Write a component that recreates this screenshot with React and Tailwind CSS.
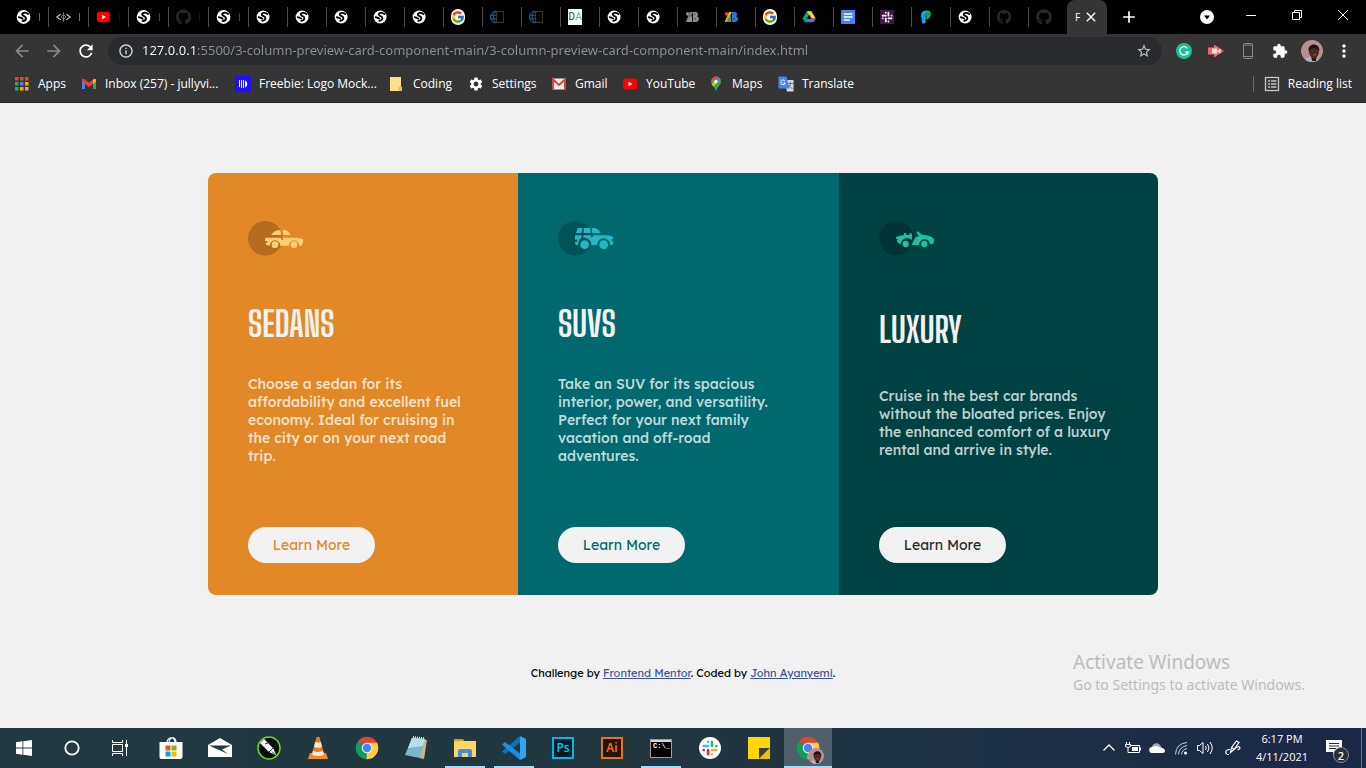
import React from "react";
import { FaGithub } from "react-icons/fa";
import { FcGoogle } from "react-icons/fc";
import {
  MdArrowBack,
  MdArrowForward,
  MdRefresh,
  MdInfoOutline,
  MdStarBorder,
  MdExtension,
  MdMoreVert,
  MdSettings,
  MdClose,
  MdAdd,
} from "react-icons/md";

/* ---------- favicons ---------- */

const Globe = () => (
  <svg viewBox="0 0 16 16" className="size-4">
    <circle cx="8" cy="8" r="7.3" fill="#fff" />
    <path
      d="M12.800 4.800C10.500 2.800 6.300 3 6.500 5.300 6.700 7.300 10.800 6.800 10.600 9.400 10.500 11 9 12 7 12.300M3 8.200C4.500 8.800 6 9 7 9.800"
      fill="none" stroke="#000" strokeWidth="2" strokeLinecap="round"
    />
  </svg>
);
const Brackets = () => (
  <svg viewBox="0 0 16 16" className="size-4" fill="none" stroke="#b9c1c6">
    <path d="M5 5 .8 8 5 11M11 5l4.200 3-4.200 3" strokeWidth="1.300" />
    <path d="m8 5 2.500 3L8 11 5.500 8zM8 3v10" stroke="#76838b" />
  </svg>
);
const YouTube = () => (
  <svg viewBox="0 0 16 16" className="size-4">
    <rect x="1" y="2.500" width="14" height="11" rx="2.500" fill="#f00" />
    <path d="M6.500 5.700v4.600L10.500 8z" fill="#fff" />
  </svg>
);
const Octocat = () => <FaGithub className="size-4 text-[#24292e]" />;
const Google = () => (
  <span className="flex size-4 items-center justify-center rounded-full bg-white">
    <FcGoogle className="size-[14px]" />
  </span>
);
const GlobeBook = () => (
  <svg viewBox="0 0 16 16" className="size-4" fill="none">
    <path d="M7 1.500a6.500 6.500 0 0 0 0 13M7 1.500C2.500 5 2.500 11 7 14.500M.8 6H7M.8 10H7" stroke="#2e6ca4" />
    <rect x="7.500" y="2" width="8" height="12" stroke="#4f4636" />
  </svg>
);
const DaIcon = () => (
  <span className="flex size-4 items-center justify-center bg-white font-['Roboto',sans-serif] text-[10px] leading-4 text-[#333]">
    D<span className="text-[#3fb8a5]">A</span>
  </span>
);
const Blocks = ({ gray }) => (
  <svg viewBox="0 0 16 16" className="size-4">
    <circle cx="3" cy="4.500" r="2" fill={gray ? "#858585" : "#e8453c"} />
    <path d="M5.500 2.500H9L4 13.500H.7z" fill={gray ? "#7b7b7b" : "#f9a11b"} />
    <path d="M5 8.500 8 7v6.500H3z" fill={gray ? "#969696" : "#34a853"} />
    <path d="M9 2.500h3.200a2.500 2.500 0 0 1 1.300 4.600 3.300 3.300 0 0 1-1 6.400H9z" fill={gray ? "#8b8b8b" : "#2a7de1"} />
    <path d="M10.500 5h1M10.500 10h1.500" stroke="#111" />
  </svg>
);
const Drive = () => (
  <svg viewBox="0 0 16 16" className="size-4">
    <path d="M5.500 1.500h5L6 9.500 3.300 14 .6 9.700z" fill="#11a861" />
    <path d="M5.500 1.500h5l5 8.300h-5z" fill="#ffcf48" />
    <path d="M3.300 14 5.900 9.700h9.600L12.800 14z" fill="#2684fc" />
    <path d="M10.600 9.700h4.900L12.800 14z" fill="#ea4335" />
    <path d="M8 5.500 5.700 9.700h4.800z" fill="#000" />
  </svg>
);
const Docs = () => (
  <svg viewBox="0 0 16 16" className="size-4">
    <rect width="16" height="16" rx="1.500" fill="#4285f4" />
    <path d="M3 4.500h10M3 8h10M3 11.500h7" stroke="#fff" strokeWidth="1.700" />
  </svg>
);
const SlackMark = ({ colors }) => (
  <g fill="none" strokeWidth="2" strokeLinecap="round">
    <path d="M6.500 3v.1M3 6.500h3.500" stroke={colors[0]} />
    <path d="M9.500 3v3.500M13 6.500h.1" stroke={colors[1]} />
    <path d="M9.500 9.500H13M9.500 13v.1" stroke={colors[2]} />
    <path d="M3 9.500h.1M6.500 9.500V13" stroke={colors[3]} />
  </g>
);
const SlackTab = () => (
  <svg viewBox="0 0 16 16" className="size-4">
    <rect width="16" height="16" fill="#481349" />
    <SlackMark colors={["#fff", "#fff", "#fff", "#fff"]} />
  </svg>
);
const PLogo = () => (
  <svg viewBox="0 0 16 16" className="size-4">
    <path d="M2.500 4.500C3.500 1.500 6 .5 9 .8L7.500 5v8c0 3-4.500 3-4.500 0V8H2z" fill="#16a3ee" />
    <path d="M8 1c5-1.500 6 2.500 5 5.500-.8 2.700-3 4.500-6 4 2-1.500 1.500-2 1-4.500z" fill="#15ad5b" />
    <path d="m6 7 2.500-3L10 5.500 12 4" fill="none" stroke="#083" />
  </svg>
);

const tabs = [
  [Globe, "bg-[#2b6fb0]"],
  [Brackets, "bg-[#1d86cf]"],
  [YouTube, "bg-[#08086b]"],
  [Globe, "bg-[#3a4a55]"],
  [Octocat, "bg-[#0a0aa8]"],
  [Globe, "bg-[#0b4fae]"],
  [Globe], [Globe], [Globe], [Globe], [Globe],
  [Google], [GlobeBook], [GlobeBook], [DaIcon], [Globe], [Globe],
  [() => <Blocks gray />], [() => <Blocks />],
  [Google], [Drive], [Docs], [SlackTab], [PLogo], [Globe], [Octocat], [Octocat],
];

function TabStrip() {
  return (
    <div className="flex h-[34px] bg-black pl-2 text-white">
      {tabs.map(([Icon, mark], i) => (
        <button
          key={i}
          aria-label={`Tab ${i + 1}`}
          className={`flex shrink-0 items-center gap-2 pl-2 ${i < 6 ? "w-10" : "w-[39px]"}`}
        >
          <Icon />
          <span className={`h-2 w-px ${mark || ""}`} />
          {i < 26 && <span className="ml-auto -mr-px h-5 w-px bg-[#4a4a4a]" />}
        </button>
      ))}
      <div className="flex w-10 shrink-0 items-center rounded-t-lg bg-[#353535] pl-2">
        <span className="w-2 text-[10px]">F</span>
        <button aria-label="Close tab">
          <MdClose className="size-4" />
        </button>
      </div>
      <button aria-label="New tab" className="ml-3">
        <MdAdd className="size-5" />
      </button>
      <div className="ml-auto flex items-center">
        <button aria-label="Search tabs" className="mr-[14px] flex size-[14px] items-center justify-center rounded-full bg-white">
          <svg viewBox="0 0 8 8" className="size-2"><path d="M1 2.500h6L4 6.500z" fill="#000" /></svg>
        </button>
        <button aria-label="Minimize" className="flex w-[46px] justify-center pb-1">
          <svg viewBox="0 0 12 12" className="size-3" stroke="#fff"><path d="M1 6.500h10" /></svg>
        </button>
        <button aria-label="Restore" className="flex w-[46px] justify-center pb-1">
          <svg viewBox="0 0 12 12" className="size-3" fill="none" stroke="#fff"><path d="M1.500 3.500h7v7h-7zM3.500 3V1.500h7v7H9" /></svg>
        </button>
        <button aria-label="Close" className="flex w-[46px] justify-center pb-1">
          <svg viewBox="0 0 12 12" className="size-3" stroke="#fff"><path d="m1 1 10 10M11 1 1 11" /></svg>
        </button>
      </div>
    </div>
  );
}

const Avatar = ({ className }) => (
  <svg viewBox="0 0 22 22" className={className}>
    <clipPath id="face"><circle cx="11" cy="11" r="11" /></clipPath>
    <g clipPath="url(#face)">
      <rect width="22" height="22" fill="#b98f90" />
      <path d="M4 22c0-4 3-5 7-5s7 2 8 5z" fill="#a9b6cb" />
      <path d="M10 15h6l-1 6h-4z" fill="#2b1a17" />
      <ellipse cx="13" cy="11.500" rx="5" ry="6.500" fill="#4a2a22" />
      <path d="M7.500 11c-1-8 11-9 11 0-2-4-8-4-11 0z" fill="#1a1214" />
      <path d="M12 14.800h3" stroke="#8f665b" />
    </g>
  </svg>
);

function Toolbar() {
  return (
    <div className="flex h-[34px] items-center bg-[#353535] pl-3 pr-3">
      <div className="flex items-center gap-3 text-[#8a8a8a]">
        <button aria-label="Back"><MdArrowBack className="size-5" /></button>
        <button aria-label="Forward"><MdArrowForward className="size-5" /></button>
        <button aria-label="Reload" className="text-white"><MdRefresh className="size-5" /></button>
      </div>
      <div className="ml-3 flex h-7 flex-1 items-center gap-2 rounded-full bg-[#292a2d] pl-[10px] pr-[10px]">
        <MdInfoOutline className="size-4 text-[#d8dadd]" />
        <input
          aria-label="Address"
          readOnly
          value="127.0.0.1:5500/3-column-preview-card-component-main/3-column-preview-card-component-main/index.html"
          className="min-w-0 flex-1 bg-[linear-gradient(to_right,#ffffff_54px,#8d9093_54px)] bg-clip-text font-['Noto_Sans',sans-serif] text-[13px] text-transparent outline-none"
        />
        <button aria-label="Bookmark this page"><MdStarBorder className="size-4 text-[#c4c6c9]" /></button>
      </div>
      <div className="ml-[14px] flex items-center gap-4">
        <button aria-label="Grammarly">
          <svg viewBox="0 0 16 16" className="size-4">
            <circle cx="8" cy="8" r="8" fill="#15c39a" />
            <path d="M11.500 5.500A4.200 4.200 0 1 0 12 9H9.300M12 9v2.500" fill="none" stroke="#fff" strokeWidth="1.300" />
          </svg>
        </button>
        <button aria-label="Screen recorder">
          <svg viewBox="0 0 16 16" className="size-4">
            <path d="M0 4.500h6V1.500L16 8 6 14.500V11.500H0z" fill="#f0686a" />
            <path d="M4 5.500h5v5H4zM9 8l3.500-2.500v5z" fill="#fff" opacity=".75" />
          </svg>
        </button>
        <button aria-label="Mobile view">
          <svg viewBox="0 0 16 16" className="size-4" fill="none" stroke="#888">
            <rect x="3.500" y=".5" width="9" height="15" rx="1" /><path d="M3.500 2h9M3.500 13.500h9" />
          </svg>
        </button>
        <button aria-label="Extensions"><MdExtension className="size-4 text-white" /></button>
        <button aria-label="Profile" className="-ml-[3px]"><Avatar className="size-[22px]" /></button>
        <button aria-label="Menu" className="-ml-[5px]"><MdMoreVert className="size-5 text-white" /></button>
      </div>
    </div>
  );
}

/* ---------- bookmarks ---------- */

const AppsGrid = () => (
  <svg viewBox="0 0 16 16" className="size-4">
    {["#ea4335", "#ea4335", "#ea4335", "#34a853", "#4285f4", "#f9ab00", "#34a853", "#f9ab00", "#f9ab00"].map((c, i) => (
      <rect key={i} x={1 + (i % 3) * 5} y={1 + Math.floor(i / 3) * 5} width="3.500" height="3.500" fill={c} />
    ))}
  </svg>
);
const GmailNew = () => (
  <svg viewBox="0 0 16 16" className="size-4">
    <path d="M1 4v9h3V7z" fill="#4285f4" /><path d="M15 4v9h-3V7z" fill="#34a853" />
    <path d="M1 3.500v2L8 11l7-5.500v-2c-1-1.500-2-.7-3 0L8 6.700 4 3.500c-1-.7-2-1.500-3 0z" fill="#ea4335" />
    <path d="M12 3.500c1-.7 3-1.200 3 1v1L12 8z" fill="#fbbc04" />
  </svg>
);
const Freebie = () => (
  <svg viewBox="0 0 16 16" className="size-4">
    <rect width="16" height="16" fill="#1c0dff" />
    <path d="M4.500 4v7M6.500 4v8M8.500 4v8" stroke="#fff" /><path d="M10 4.500c3 1 3 6 0 7z" fill="#fff" />
  </svg>
);
const Folder = () => (
  <svg viewBox="0 0 16 16" className="size-4">
    <path d="M1 1h11v9.500l1 1V15H1z" fill="#ffe08a" /><path d="M9.500 15v-3.500l2-1.500 1.500 1.500V15z" fill="#e9c352" />
  </svg>
);
const GmailOld = () => (
  <svg viewBox="0 0 16 16" className="size-4">
    <rect x="1" y="2.500" width="14" height="11" rx="1" fill="#eee" />
    <path d="M2 13.500v-10L8 9l6-5.500v10" fill="none" stroke="#d9443a" strokeWidth="2" />
  </svg>
);
const MapPin = () => (
  <svg viewBox="0 0 16 16" className="size-4">
    <path d="M8 .5a5 5 0 0 1 5 5C13 9 9 11 8 15.500 7 11 3 9 3 5.500a5 5 0 0 1 5-5z" fill="#34a853" />
    <path d="M8 .5a5 5 0 0 0-4 2L6.500 5 11 1.500C10 .8 9 .5 8 .5z" fill="#ea4335" />
    <path d="m11 1.500-4.500 4L8 8l4.500-4.500z" fill="#4285f4" />
    <path d="m3.700 8.200 4.100-5L8 8l-2.600 2.600z" fill="#fbbc04" />
    <circle cx="8" cy="5.500" r="1.700" fill="#fff" />
  </svg>
);
const Translate = () => (
  <svg viewBox="0 0 16 16" className="size-4">
    <path d="M6 4h9.500v11.500H9z" fill="#d5d9de" /><path d="M.5.500h8l3 12H.5z" fill="#4a83ee" />
    <path d="M10 7.500h5M12.500 6v1.500c0 2-1.500 3.500-2 4M11 9c1 2 2 3 3.500 3.500" stroke="#66727f" fill="none" />
    <path d="M7 5a2.300 2.300 0 1 0 .3 2H5.500" fill="none" stroke="#fff" />
  </svg>
);

const bookmarks = [
  ["Apps", AppsGrid, "w-[67px]"],
  ["Inbox (257) - jullyvi...", GmailNew, "w-[154px]"],
  ["Freebie: Logo Mock...", Freebie, "w-[154px]"],
  ["Coding", Folder, "w-[79px]"],
  ["Settings", () => <MdSettings className="size-4" />, "w-[83px]"],
  ["Gmail", GmailOld, "w-[71px]"],
  ["YouTube", YouTube, "w-[86px]"],
  ["Maps", MapPin, "w-[70px]"],
  ["Translate", Translate, "w-[80px]"],
];

function Bookmarks() {
  return (
    <nav className="flex h-[35px] items-center border-b border-[#252525] bg-[#353535] pl-[14px] pr-[14px] pb-[2px] text-[12px] text-white">
      {bookmarks.map(([label, Icon, width]) => (
        <a href="#" key={label} className={`flex shrink-0 items-center gap-2 whitespace-nowrap ${width}`}>
          <Icon />
          {label}
        </a>
      ))}
      <button className="ml-auto flex items-center gap-2 whitespace-nowrap border-l border-[#6a6a6a] pl-[10px] leading-4">
        <svg viewBox="0 0 16 16" className="size-4" fill="none" stroke="#c6c6c6">
          <rect x="1.500" y="1.500" width="13" height="13" strokeWidth="1.300" />
          <path d="M4 5h2M7 5h5.500M4 8h2M7 8h5.500M4 11h2M7 11h5.500" strokeWidth="1.500" />
        </svg>
        Reading list
      </button>
    </nav>
  );
}

/* ---------- page ---------- */

const Sedan = () => (
  <svg viewBox="0 0 168 105" className="h-[35px] w-14 shrink-0">
    <circle cx="52" cy="52" r="52" opacity=".2" />
    <g fill="#ffd073">
      <path d="M69 42 78 32Q85 27 97 27L100 42ZM104 27Q121 26 127 42H106Z" />
      <path d="M53 50H99L101 57H106L105 50H140Q158 51 165 54V64L161 74H154A16 16 0 0 0 122 74H97A16 16 0 0 0 65 74C58 74 53 70 52 65H58V60H51V53Z" />
      <circle cx="81" cy="71" r="10" /><circle cx="138" cy="71" r="10" />
    </g>
  </svg>
);
const Suv = () => (
  <svg viewBox="0 0 168 105" className="h-[35px] w-14 shrink-0">
    <circle cx="52" cy="52" r="52" opacity=".2" />
    <g fill="#26b5c4">
      <path d="M54 36 59 21H74L71 36ZM78 21H96L99 36H76ZM101 21H110Q122 24 128 36H103Z" />
      <path d="M51 43H71V50Q62 54 60 72H54L51 67V62H58V56H51ZM76 43H99V48H105V43H145Q160 43 165 48V54H161V60H165V68L162 72H157A20 20 0 0 0 117 72H100C100 58 90 50 76 50Z" />
      <circle cx="80" cy="71" r="13" /><circle cx="137" cy="71" r="13" />
    </g>
  </svg>
);
const Luxury = () => (
  <svg viewBox="0 0 168 105" className="h-[35px] w-14 shrink-0">
    <circle cx="52" cy="52" r="52" opacity=".2" />
    <g fill="#1fbf9f">
      <path d="M51 48Q62 43 74 43L76 36H81L83 42H91V37H98Q101 48 98 57C90 49 70 48 65 69Q56 68 53 59L57 55L51 53Z" />
      <path d="M98 72 108 51Q112 47 120 46L112 34 116 31 130 41Q154 42 165 54V61L162 68 153 70C152 50 122 48 120 72Z" />
      <circle cx="80" cy="69" r="9.500" /><circle cx="136" cy="69" r="9.500" />
    </g>
  </svg>
);

const cards = [
  {
    title: "SEDANS", Icon: Sedan, bg: "bg-[#e28826]", ink: "text-[#e28826]",
    text: "Choose a sedan for its\naffordability and excellent fuel\neconomy. Ideal for cruising in\nthe city or on your next road\ntrip.",
  },
  {
    title: "SUVS", Icon: Suv, bg: "bg-[#00696f]", ink: "text-[#00696f]",
    text: "Take an SUV for its spacious\ninterior, power, and versatility.\nPerfect for your next family\nvacation and off-road\nadventures.",
  },
  {
    title: "LUXURY", Icon: Luxury, bg: "bg-[#004241]", ink: "text-[#1c2f2f]",
    text: "Cruise in the best car brands\nwithout the bloated prices. Enjoy\nthe enhanced comfort of a luxury\nrental and arrive in style.",
  },
];

function Page() {
  return (
    <div className="relative flex flex-1 flex-col items-center bg-[#f1f1f1] px-8 pt-[70px] font-['Lexend_Deca','Lexend','Inter',sans-serif]">
      <main className="grid min-h-[422px] w-full max-w-[950px] grid-cols-[310fr_321fr_319fr] overflow-hidden rounded-lg">
        {cards.map(({ title, Icon, bg, ink, text }) => (
          <section key={title} className={`flex flex-col items-start justify-between px-10 pt-12 pb-8 ${bg}`}>
            <div className="mb-[17px]"><Icon /></div>
            <h2 className="font-['Big_Shoulders_Display','Roboto_Condensed',sans-serif] text-[35px] leading-[48px] font-bold text-[#f2f2f2]">
              {title}
            </h2>
            <p className="mb-[35px] text-[14px] leading-[18px] font-medium whitespace-pre-line text-white/75">{text}</p>
            <button className={`h-9 w-[127px] rounded-full bg-[#f2f2f2] text-[14px] ${ink}`}>Learn More</button>
          </section>
        ))}
      </main>
      <footer className="mt-[70px] text-[11px] leading-4 text-black">
        Challenge by <a href="#" className="text-[#3e52a3] underline">Frontend Mentor</a>. Coded by{" "}
        <a href="#" className="text-[#3e52a3] underline">John Ayanyemi</a>.
      </footer>
      <div className="absolute right-14 bottom-8 w-[237px] whitespace-nowrap font-['Noto_Sans',sans-serif] text-[#bcbcbc]">
        <p className="text-[19px] leading-6">Activate Windows</p>
        <p className="text-[14px] leading-[22px]">Go to Settings to activate Windows.</p>
      </div>
    </div>
  );
}

/* ---------- taskbar ---------- */

const Chrome = ({ className = "size-6" }) => (
  <svg viewBox="0 0 24 24" className={className}>
    <path d="M12 12 2.500 6A11.200 11.200 0 0 1 22 6.800z" fill="#db4437" />
    <path d="M12 12 22 6.800a11.200 11.200 0 0 1-10.500 16.400z" fill="#ffcd40" />
    <path d="M12 12l-.5 11.200A11.200 11.200 0 0 1 2.500 6z" fill="#0f9d58" />
    <path d="m11.500 23.200 5-8.500L12 12z" fill="#ffcd40" />
    <path d="M12 6.800h9.900A11 11 0 0 1 23 12l-6-2z" fill="#ffcd40" />
    <path d="M7.400 14.500 2.500 6 8 8z" fill="#0f9d58" />
    <circle cx="12" cy="12" r="5.300" fill="#f1f1f1" /><circle cx="12" cy="12" r="4.200" fill="#4285f4" />
  </svg>
);

const AdobeIcon = ({ label, style }) => (
  <span className={`flex size-[22px] items-center justify-center border-2 pb-px font-['Open_Sans',sans-serif] text-[12px] leading-none font-semibold ${style}`}>
    {label}
  </span>
);

const apps = [
  ["Microsoft Store", () => (
    <svg viewBox="0 0 24 24" className="size-6">
      <path d="M8 7C8 0 16 0 16 7M10 7c0-7 7-7 7 0" fill="none" stroke="#fff" strokeWidth="1.200" />
      <path d="M.5 6h23v15q0 2-2 2h-19q-2 0-2-2z" fill="#fff" />
      <path d="M6.500 9.500h5v5h-5z" fill="#f25022" /><path d="M12.500 9.500h5v5h-5z" fill="#7fba00" />
      <path d="M6.500 15.500h5v5h-5z" fill="#00a4ef" /><path d="M12.500 15.500h5v5h-5z" fill="#ffb900" />
    </svg>
  )],
  ["Mail", () => (
    <svg viewBox="0 0 24 24" className="size-6">
      <path d="M0 9 12 2l12 7v12H0z" fill="#fff" /><path d="M1 9.500h22l-9 4 6 4.500z" fill="#213a43" />
    </svg>
  )],
  ["CorelDRAW", () => (
    <svg viewBox="0 0 24 24" className="size-6">
      <circle cx="12" cy="12" r="11" fill="#070a07" stroke="#76d21c" strokeWidth="1.500" />
      <path d="m3 7 4-4 9 9 3.500 7.500L12 16z" fill="#fff" /><path d="m8 8 5-2M12 16l4-4M15 15.500l3 3" stroke="#222" fill="none" />
    </svg>
  )],
  ["VLC", () => (
    <svg viewBox="0 0 24 24" className="size-6">
      <path d="M4 17h16l2 6H2z" fill="#f58a1f" />
      <path d="m10.500 1-5 18c2 2.500 11 2.500 13 0l-5-18z" fill="#f07c12" />
      <path d="m9.300 6-1.300 5c2 1 6 1 8 0l-1.300-5q-2.700 1-5.400 0zM7 15l-1 3.500c2 2 10 2 12 0L17 15q-5 2-10 0z" fill="#e8ebec" />
    </svg>
  )],
  ["Google Chrome", () => <Chrome />],
  ["Notepad", () => (
    <svg viewBox="0 0 24 24" className="size-6">
      <path d="m8 2 15 2-3 19-5-1z" fill="#cbb68d" /><path d="m8 2 13 1-5 19L1 19z" fill="#78b9cb" />
      <path d="m8 2 13 1-2 7-15 2z" fill="#b6dfe7" /><path d="m9 1 12 1.500" stroke="#eee" strokeWidth="2" strokeDasharray="1 1" />
    </svg>
  )],
  ["File Explorer", () => (
    <svg viewBox="0 0 24 24" className="size-6">
      <path d="M1 3h9l2 3H1z" fill="#d89a12" /><path d="M1 5h22v16H1z" fill="#fdd465" />
      <path d="M5 21v-6q0-2 2-2h10q2 0 2 2v6h-4v-4H9v4z" fill="#3e8fdc" />
    </svg>
  ), "open"],
  ["Visual Studio Code", () => (
    <svg viewBox="0 0 24 24" className="size-6">
      <path d="M18 0v6.500L3 18 0 15.500z" fill="#0873bd" /><path d="M18 24v-6.500L3 6 0 8.500z" fill="#1f8fdf" />
      <path d="m18 0 6 3v18l-6 3z" fill="#2da7ee" />
    </svg>
  ), "open"],
  ["Photoshop", () => <AdobeIcon label="Ps" style="border-[#00b8ea] bg-[#001d26] text-[#00c8ff]" />],
  ["Illustrator", () => <AdobeIcon label="Ai" style="border-[#e87410] bg-[#261300] text-[#ff7c00]" />],
  ["Command Prompt", () => (
    <span className="flex h-[19px] w-[22px] flex-col border border-[#9b9b9b] bg-black font-['Liberation_Mono',monospace] text-[7px] leading-[9px] font-bold text-white">
      <span className="h-[2px] bg-[#d8d8d8]" />
      <span className="pl-px">C:\_</span>
    </span>
  ), "open"],
  ["Slack", () => (
    <svg viewBox="1.500 1.500 13 13" className="size-[22px]">
      <circle cx="8" cy="8" r="6.500" fill="#fff" />
      <g transform="translate(2 2) scale(.75)"><SlackMark colors={["#36c5f0", "#2eb67d", "#ecb22e", "#e01e5a"]} /></g>
    </svg>
  )],
  ["Sticky Notes", () => (
    <svg viewBox="0 0 22 22" className="size-[22px]">
      <path d="M0 0h22v22H0z" fill="#ffd60a" /><path d="M11 22V11h11z" fill="#3e3d38" />
      <path d="M22 11v11H11z" fill="#efc000" />
    </svg>
  )],
  ["Google Chrome profile", () => (
    <span className="relative flex">
      <Chrome />
      <Avatar className="absolute -right-1 -bottom-1 size-4" />
    </span>
  ), "active"],
];

function Taskbar() {
  return (
    <footer className="flex h-10 bg-linear-to-r from-[#213a42] via-[#21363f] to-[#1a2746] font-['Open_Sans',sans-serif] text-white">
      <button aria-label="Start" className="flex w-12 items-center justify-center">
        <svg viewBox="0 0 16 16" className="size-4" fill="#fff"><path d="M0 2.200 6.500 1.300v6.300H0zM7.300 1.200 16 0v7.600H7.300zM0 8.400h6.500v6.300L0 13.800zM7.300 8.400H16V16l-8.700-1.200z" /></svg>
      </button>
      <button aria-label="Cortana" className="flex w-12 items-center justify-center">
        <svg viewBox="0 0 16 16" className="size-4" fill="none" stroke="#fff" strokeWidth="1.800"><circle cx="8" cy="8" r="6.700" /></svg>
      </button>
      <button aria-label="Task View" className="mr-[3px] flex w-12 items-center justify-center">
        <svg viewBox="0 0 16 16" className="size-4" fill="none" stroke="#fff"><path d="M.5 0v2.500h10V0M.5 16v-2.500h10V16M.5 4.500h10v7H.5zM14.500 0v16" /><path d="M13 4h3v3h-3z" fill="#fff" stroke="none" /></svg>
      </button>
      <div className="flex gap-px">
        {apps.map(([name, Icon, state]) => (
          <button
            key={name}
            aria-label={name}
            className={`relative flex w-12 items-center justify-center ${state === "active" ? "bg-[#4e606a]" : ""}`}
          >
            <Icon />
            {state && <span className={`absolute bottom-0 h-[2px] bg-[#a6dcf8] ${state === "active" ? "w-12" : "w-10"}`} />}
          </button>
        ))}
      </div>
      <div className="ml-auto flex items-center gap-2">
        <button aria-label="Show hidden icons">
          <svg viewBox="0 0 16 16" className="size-4" fill="none" stroke="#fff" strokeWidth="1.300"><path d="m2.500 10.500 5.500-5.500 5.500 5.500" /></svg>
        </button>
        <button aria-label="Battery">
          <svg viewBox="0 0 16 16" className="size-4" fill="none" stroke="#fff">
            <path d="M5.500 5.500h9v7h-9M15.500 7.500v3M1.500 2v2.500M4.500 2v2.500M.5 4.500h5v2q-2.500 2-5 0zM3 7.500v5h3" /><path d="M7 7h6v4H7z" fill="#fff" stroke="none" />
          </svg>
        </button>
        <button aria-label="OneDrive">
          <svg viewBox="0 0 16 16" className="size-4"><path d="M3 8a4.500 4.500 0 0 1 8-3l2 3z" fill="#a7adb8" /><path d="M3 13a3 3 0 0 1 .5-6L7 6l4 1.500q5 .5 5 3.500 0 2-2.500 2z" fill="#fff" /></svg>
        </button>
        <button aria-label="Network">
          <svg viewBox="0 0 16 16" className="size-4" fill="none" stroke="#fff"><path d="M2.500 14.500Q3 3.500 14 2.500M5.500 14.500Q6 7 14 5.500M8.500 14.500Q9 9.500 14 8.500" stroke="#c9ced7" /><circle cx="12.500" cy="13" r="1.500" fill="#fff" stroke="none" /></svg>
        </button>
        <button aria-label="Volume">
          <svg viewBox="0 0 16 16" className="size-4" fill="none" stroke="#fff"><path d="M.5 5.500h2l3.500-3v11l-3.500-3h-2zM8.500 6q1.500 2 0 4M10.500 4q3 4 0 8M13 2q4.500 6 0 12" /></svg>
        </button>
        <button aria-label="Windows Ink" className="ml-1">
          <svg viewBox="0 0 16 16" className="size-4" fill="none" stroke="#fff" strokeWidth="1.200"><path d="m5.500 12.500 1-5 5-6.500 2.500 1.500-5 7zM6.500 7.500 9 9.500M5 9.500Q1 9.500 .8 12t3.200 2.500M9 9.500q4-4 5.500-2.500t-2 3" /></svg>
        </button>
        <time className="ml-[6px] w-[54px] pb-px text-center text-[11px] leading-[18px] whitespace-nowrap">
          6:17 PM<br />4/11/2021
        </time>
        <button aria-label="Notifications" className="relative ml-2 mr-3 flex size-[24px] items-center">
          <svg viewBox="0 0 18 18" className="size-[18px]"><path d="M1 1h16v12h-6l-3 4v-4H1z" fill="#fff" /><path d="M4 4.500h10M4 7h10M4 9.500h7" stroke="#1c2b47" /></svg>
          <span className="absolute right-0 -bottom-[3px] flex size-4 items-center justify-center rounded-full border border-[#8b8f96] bg-[#2c2f35] text-[11px] leading-none font-semibold">2</span>
        </button>
        <span className="mr-1 -ml-2 h-10 w-px bg-[#6a7286]" />
      </div>
    </footer>
  );
}

export default function App() {
  return (
    <div className="flex min-h-screen flex-col overflow-x-hidden font-['Open_Sans',sans-serif]">
      <header>
        <TabStrip />
        <Toolbar />
        <Bookmarks />
      </header>
      <Page />
      <Taskbar />
    </div>
  );
}
